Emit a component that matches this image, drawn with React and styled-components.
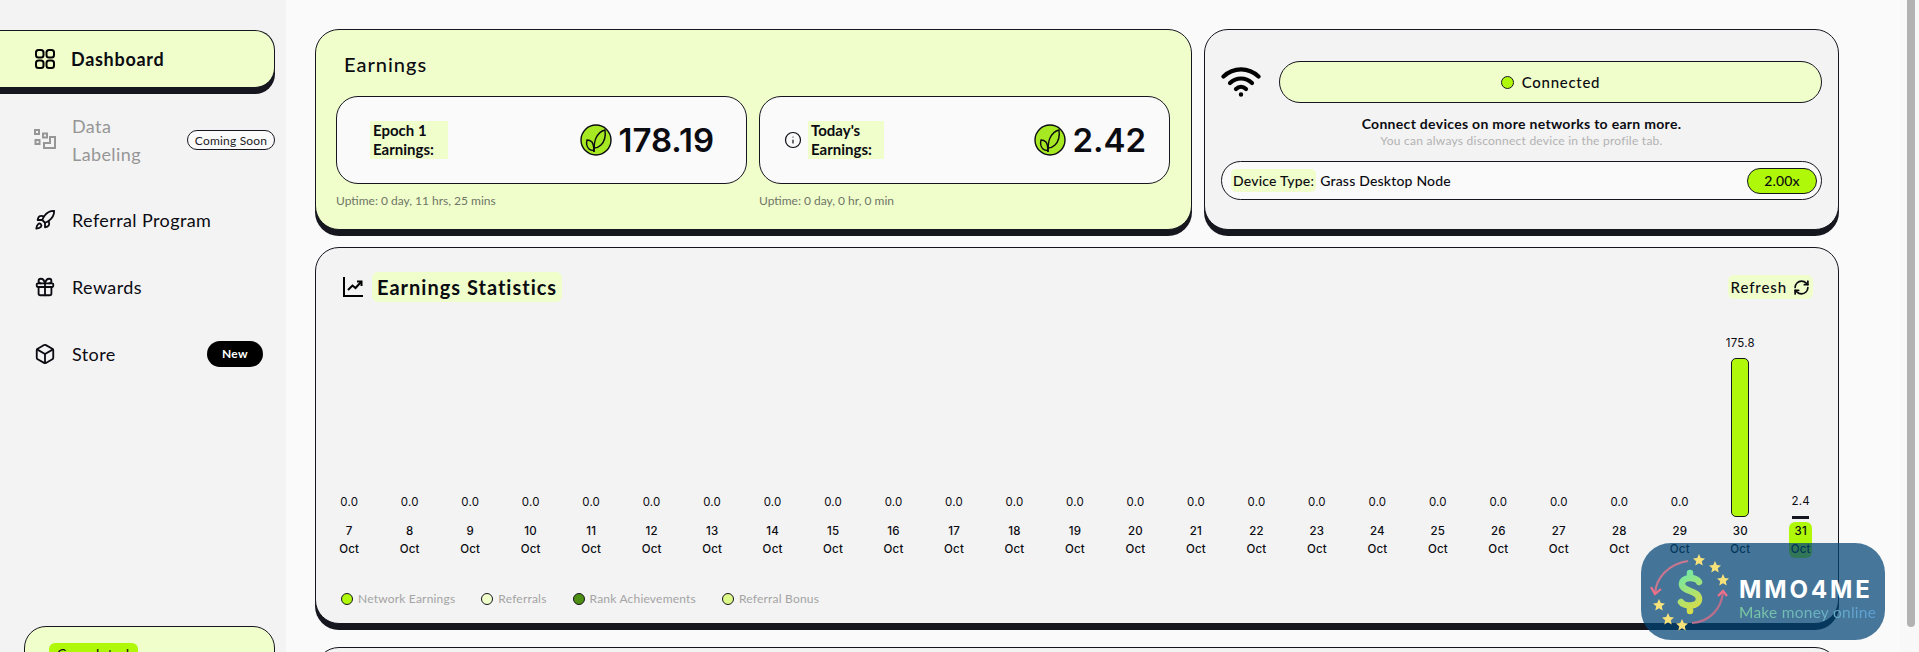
import React from 'react';
import styled, { createGlobalStyle } from 'styled-components';
import { Rocket, Gift, Box, RefreshCw, Info } from 'lucide-react';

const LIME = '#aff80a';
const PALE = '#f0fecb';
const INK = '#16161f';
const TEXT_FONT = '"Lato", "Liberation Sans", sans-serif';
const NUM_FONT = '"Inter", "Liberation Sans", sans-serif';

const GlobalStyle = createGlobalStyle`
  html, body {
    margin: 0;
    height: 100%;
    overflow: hidden;
    background: #fafafa;
  }
  * { box-sizing: border-box; }
`;

const Page = styled.div`
  position: relative;
  display: flex;
  height: 652px;
  overflow: hidden;
  font-family: ${TEXT_FONT};
  color: #0b0b12;
`;

const Sidebar = styled.aside`
  flex: 0 0 286px;
  background: #f3f3f3;
  padding: 30px 11px 0 0;
  display: flex;
  flex-direction: column;
  overflow: hidden;
`;

const NavItem = styled.div`
  display: flex;
  align-items: center;
  flex-shrink: 0;
  height: ${(p) => p.$height || 67}px;
  padding-left: 34px;
  padding-right: ${(p) => p.$padRight || 0}px;
  font-size: 18px;
  letter-spacing: 0.4px;
  color: ${(p) => (p.$muted ? '#969696' : '#0b0b12')};
  svg { flex-shrink: 0; }
`;

const ActiveItem = styled(NavItem)`
  background: ${PALE};
  border: 1px solid ${INK};
  border-left: 0;
  border-radius: 0 20px 20px 0;
  box-shadow: 0 6px 0 ${INK};
  font-weight: 700;
  letter-spacing: 0.7px;
  margin-bottom: 6px;
  padding-left: 35px;
`;

const NavLabel = styled.span`
  margin-left: 16px;
  line-height: 28px;
  width: ${(p) => p.$width || 'auto'};
`;

const SoonBadge = styled.span`
  margin-left: auto;
  height: 20px;
  width: 88px;
  border: 1px solid ${INK};
  border-radius: 10px;
  font-size: 12px;
  letter-spacing: 0.2px;
  color: #1c1c26;
  background: #fafafa;
  display: flex;
  align-items: center;
  justify-content: center;
`;

const NewBadge = styled.span`
  margin-left: auto;
  width: 56px;
  height: 26px;
  border-radius: 13px;
  background: #000;
  color: #fff;
  font-size: 12px;
  font-weight: 700;
  display: flex;
  align-items: center;
  justify-content: center;
`;

const PromoCard = styled.div`
  flex-shrink: 0;
  margin: 239px 0 0 24px;
  width: 251px;
  height: 120px;
  background: ${PALE};
  border: 1px solid ${INK};
  border-radius: 22px;
  padding: 16px 0 0 24px;
`;

const CompletedTag = styled.span`
  display: inline-block;
  background: ${LIME};
  border-radius: 6px;
  padding: 2px 8px;
  font-size: 14px;
  letter-spacing: 0.6px;
  line-height: 18px;
`;

const Main = styled.main`
  flex: 1;
  padding: 29px 0 0 29px;
  display: flex;
  flex-direction: column;
  gap: 17px;
  overflow: hidden;
`;

const TopRow = styled.div`
  display: grid;
  grid-template-columns: 877px 635px;
  gap: 12px;
  flex-shrink: 0;
`;

const Card = styled.section`
  background: ${(p) => (p.$pale ? PALE : '#f3f3f3')};
  border: 1px solid ${INK};
  border-radius: 24px;
  box-shadow: ${(p) => (p.$flat ? 'none' : `0 6px 0 ${INK}`)};
`;

const EarningsCard = styled(Card)`
  height: 201px;
  padding: 21px 21px 0 20px;
`;

const CardTitle = styled.h2`
  margin: 0 0 0 8px;
  font-size: 20px;
  line-height: 26px;
  font-weight: 500;
  letter-spacing: 1px;
`;

const EarnGrid = styled.div`
  display: grid;
  grid-template-columns: 411px 411px;
  gap: 12px;
  margin-top: 19px;
`;

const EarnBox = styled.div`
  height: 88px;
  background: #fafafa;
  border: 1px solid ${INK};
  border-radius: 22px;
  display: flex;
  align-items: center;
  padding: 0 ${(p) => p.$padRight}px 0 ${(p) => p.$padLeft}px;
`;

const EarnLabel = styled.div`
  background: ${PALE};
  padding: 0 3px;
  margin-left: ${(p) => p.$gap || 0}px;
  width: ${(p) => p.$width}px;
  font-size: 15px;
  font-weight: 700;
  line-height: 19px;
`;

const EarnValue = styled.div`
  margin-left: auto;
  display: flex;
  align-items: center;
  gap: 6px;
  font-family: ${NUM_FONT};
  font-size: 33px;
  font-weight: 600;
`;

const Uptime = styled.div`
  margin-top: 9px;
  font-size: 12px;
  color: #6f7567;
`;

const StatusCard = styled(Card)`
  height: 201px;
  padding: 31px 16px 0 16px;
`;

const StatusTop = styled.div`
  display: flex;
  align-items: center;
  gap: 18px;
`;

const ConnectedPill = styled.div`
  flex: 1;
  height: 42px;
  background: ${PALE};
  border: 1px solid ${INK};
  border-radius: 21px;
  display: flex;
  align-items: center;
  justify-content: center;
  gap: 8px;
  font-size: 15px;
  font-weight: 500;
  letter-spacing: 0.7px;
`;

const Dot = styled.span`
  display: inline-block;
  flex-shrink: 0;
  width: ${(p) => p.$size || 12}px;
  height: ${(p) => p.$size || 12}px;
  border-radius: 50%;
  border: 1px solid ${INK};
  background: ${(p) => p.$color || LIME};
`;

const StatusHead = styled.div`
  margin-top: 12px;
  text-align: center;
  font-size: 14px;
  font-weight: 700;
  line-height: 18px;
  letter-spacing: 0.3px;
`;

const StatusSub = styled.div`
  text-align: center;
  font-size: 12px;
  line-height: 16px;
  letter-spacing: 0.25px;
  color: #b2b2b2;
`;

const DeviceRow = styled.div`
  margin-top: 12px;
  height: 39px;
  background: #fafafa;
  border: 1px solid ${INK};
  border-radius: 20px;
  display: flex;
  align-items: center;
  padding: 0 4px 0 9px;
  font-size: 14px;
  font-weight: 500;
  letter-spacing: 0.2px;
`;

const DeviceTag = styled.span`
  background: ${PALE};
  border-radius: 5px;
  padding: 3px 2px;
  margin-right: 4px;
  font-weight: 500;
`;

const RateBadge = styled.span`
  margin-left: auto;
  width: 70px;
  height: 26px;
  background: ${LIME};
  border: 1px solid ${INK};
  border-radius: 13px;
  display: flex;
  align-items: center;
  justify-content: center;
`;

const StatsCard = styled(Card)`
  flex-shrink: 0;
  width: 1524px;
  height: 377px;
  padding: 24px 7px 0 3px;
`;

const StatsHeader = styled.div`
  display: flex;
  align-items: center;
  padding: 0 18px 0 23px;
  height: 30px;
`;

const TitleTag = styled.span`
  background: ${PALE};
  border-radius: 6px;
  padding: 3px 5px;
  margin-left: 8px;
  font-size: 20px;
  font-weight: 700;
  letter-spacing: 1px;
  line-height: 24px;
`;

const RefreshTag = styled.span`
  margin-left: auto;
  background: ${PALE};
  border-radius: 6px;
  padding: 2px 3px;
  font-size: 15px;
  font-weight: 500;
  letter-spacing: 0.9px;
  line-height: 20px;
  display: inline-flex;
  align-items: center;
  gap: 6px;
`;

const Chart = styled.div`
  display: grid;
  grid-template-columns: repeat(25, 1fr);
  align-items: end;
  height: 256px;
  font-family: ${NUM_FONT};
  font-size: 11.5px;
  letter-spacing: 0.2px;
  text-align: center;
`;

const Column = styled.div`
  display: flex;
  flex-direction: column;
  align-items: center;
`;

const BarValue = styled.div`
  line-height: 14px;
  margin-bottom: ${(p) => (p.$bar ? 8 : 13)}px;
`;

const Bar = styled.div`
  width: ${(p) => (p.$height > 10 ? 18 : 17)}px;
  height: ${(p) => p.$height}px;
  background: ${(p) => (p.$height > 10 ? LIME : INK)};
  border: ${(p) => (p.$height > 10 ? `1px solid ${INK}` : '0')};
  border-radius: ${(p) => (p.$height > 10 ? 5 : 0)}px;
  margin-bottom: ${(p) => (p.$height > 10 ? 5 : 3)}px;
`;

const DateCell = styled.div`
  width: 23px;
  line-height: 18px;
  font-weight: 500;
  background: ${(p) => (p.$today ? LIME : 'transparent')};
  border-radius: 6px;
`;

const Legend = styled.div`
  display: flex;
  align-items: center;
  margin-top: 33px;
  padding-left: 22px;
  font-size: 12px;
  letter-spacing: 0.2px;
  color: #a4a4a4;
`;

const LegendItem = styled.div`
  display: flex;
  align-items: center;
  gap: 5px;
  margin-right: 26px;
`;

const BottomCard = styled(Card)`
  flex-shrink: 0;
  width: 1524px;
  height: 120px;
  margin-top: 6px;
`;

const ScrollTrack = styled.div`
  flex: 0 0 19px;
  background: #f8f8f8;
  padding-left: 7px;
`;

const ScrollThumb = styled.div`
  width: 8px;
  height: 627px;
  background: #b2b2b2;
  border-radius: 0 0 4px 4px;
`;

const Watermark = styled.div`
  position: absolute;
  left: 1641px;
  top: 543px;
  width: 244px;
  height: 97px;
  border-radius: 30px;
  background: rgba(0, 68, 118, 0.72);
  display: flex;
  align-items: center;
  padding-left: 8px;
`;

const WatermarkText = styled.div`
  margin: 15px 0 0 6px;
  flex-shrink: 0;
  white-space: nowrap;
`;

const WatermarkName = styled.div`
  color: #fff;
  font-family: "Inter", sans-serif;
  font-size: 24px;
  font-weight: 700;
  line-height: 26px;
  letter-spacing: 2.9px;
`;

const WatermarkSlogan = styled.div`
  font-family: "Lato", sans-serif;
  font-size: 15.5px;
  line-height: 18px;
  letter-spacing: 0.25px;
  color: transparent;
  background: linear-gradient(90deg, #7fcda0, #5c9fd8);
  background-clip: text;
  -webkit-background-clip: text;
`;

function GridIcon() {
  return (
    <svg width="20" height="20" viewBox="0 0 20 20" fill="none" stroke="#000" strokeWidth="2">
      <rect x="1" y="1" width="7.5" height="7.5" rx="2.5" />
      <rect x="11.5" y="1" width="7.5" height="7.5" rx="2.5" />
      <rect x="1" y="11.5" width="7.5" height="7.5" rx="2.5" />
      <rect x="11.5" y="11.5" width="7.5" height="7.5" rx="2.5" />
    </svg>
  );
}

function LabelingIcon() {
  return (
    <svg width="22" height="22" viewBox="0 0 22 22" fill="none" stroke="#969696" strokeWidth="2">
      <rect x="1" y="1" width="4" height="4" />
      <rect x="9" y="4.5" width="4" height="4" />
      <rect x="1.5" y="11" width="4" height="4" />
      <path d="M10 19h11V8h-5v6h-6z" />
    </svg>
  );
}

function TrendIcon() {
  return (
    <svg width="22" height="22" viewBox="0 0 22 22" fill="none" stroke="#000" strokeWidth="2">
      <path d="M2 1v19h19" />
      <path d="M6 14l4.500-4.500 3 2.500 5.500-6" />
      <path d="M15 5.500h4.500V10" />
    </svg>
  );
}

function Leaf({ size = 32 }) {
  return (
    <svg width={size} height={size} viewBox="0 0 32 32" fill="none" stroke="#0b0b12" strokeWidth="1.4">
      <circle cx="16" cy="16" r="15" fill="#a6e822" />
      <path d="M14 28c0-6 0-10 2-14 2-4 5-7 9-8 1 7-1 12-4 15-2 2-5 3-7 3" />
      <path d="M14 28c0-3 0-7-2-10-1-1-3-2-5-2-1 4 0 7 2 9 1 1 3 1.500 5 1.500" />
    </svg>
  );
}

function WifiIcon() {
  return (
    <svg width="40" height="30" viewBox="0 0 40 30" fill="none" stroke="#000" strokeWidth="4.2" strokeLinecap="round">
      <path d="M2.500 9.500c10-9.500 25-9.500 35 0" />
      <path d="M9 16c6.500-6 15.500-6 22 0" />
      <path d="M15 22c3-2.800 7-2.800 10 0" />
      <circle cx="20" cy="27.500" r="1.400" fill="#000" strokeWidth="1.600" />
    </svg>
  );
}

function Star({ x, y }) {
  return (
    <path
      transform={`translate(${x} ${y})`}
      d="M0-6 1.800-2 6-1.600 2.800 1.300 3.700 5.500 0 3.300-3.700 5.500-2.800 1.300-6-1.600-1.800-2z"
      fill="#f7e27a"
    />
  );
}

function MoneyLogo() {
  return (
    <svg width="84" height="84" viewBox="0 0 84 84" fill="none" style={{ flexShrink: 0 }}>
      <defs>
        <linearGradient id="dollarFill" gradientUnits="userSpaceOnUse" x1="31" y1="23" x2="53" y2="61">
          <stop offset="0" stopColor="#6fe8a8" />
          <stop offset="1" stopColor="#e2dc3e" />
        </linearGradient>
      </defs>
      <path d="M39 11C20 14 7 27 6 44" stroke="#c9768f" strokeWidth="2.200" />
      <path d="M2 37l4 7 6-5" stroke="#f0708a" strokeWidth="2.200" />
      <path d="M43 73c17-1 30-14 31-32" stroke="#b96f8c" strokeWidth="2.200" />
      <path d="M69 46l5-5 4 5" stroke="#f0708a" strokeWidth="2.200" />
      <path
        d="M50 32C48 27 33 26 33 34 33 42 50 40 50 49 50 57 35 57 32 52M41 23v5M41 56v5"
        stroke="url(#dollarFill)"
        strokeWidth="6.500"
        strokeLinecap="round"
      />
      <Star x={50} y={10} />
      <Star x={66} y={17} />
      <Star x={74} y={30} />
      <Star x={10} y={55} />
      <Star x={19} y={69} />
      <Star x={33} y={75} />
    </svg>
  );
}

const DAYS = Array.from({ length: 25 }, (_, i) => {
  const day = 7 + i;
  if (day === 30) return { day, value: '175.8', bar: 159 };
  if (day === 31) return { day, value: '2.4', bar: 3 };
  return { day, value: '0.0', bar: 0 };
});

const LEGEND = [
  { name: 'Network Earnings', color: LIME },
  { name: 'Referrals', color: PALE },
  { name: 'Rank Achievements', color: '#4c8f13' },
  { name: 'Referral Bonus', color: '#dcf98a' },
];

export default function App() {
  return (
    <Page>
      <GlobalStyle />
      <Sidebar>
        <ActiveItem $height={58}>
          <GridIcon />
          <NavLabel>Dashboard</NavLabel>
        </ActiveItem>
        <NavItem $height={92} $muted>
          <LabelingIcon />
          <NavLabel $width="70px">Data Labeling</NavLabel>
          <SoonBadge>Coming Soon</SoonBadge>
        </NavItem>
        <NavItem>
          <Rocket size={22} strokeWidth={2} />
          <NavLabel>Referral Program</NavLabel>
        </NavItem>
        <NavItem>
          <Gift size={22} strokeWidth={2} />
          <NavLabel>Rewards</NavLabel>
        </NavItem>
        <NavItem $padRight={12}>
          <Box size={22} strokeWidth={2} />
          <NavLabel>Store</NavLabel>
          <NewBadge>New</NewBadge>
        </NavItem>
        <PromoCard>
          <CompletedTag>Completed</CompletedTag>
        </PromoCard>
      </Sidebar>

      <Main>
        <TopRow>
          <EarningsCard $pale>
            <CardTitle>Earnings</CardTitle>
            <EarnGrid>
              <div>
                <EarnBox $padLeft={33} $padRight={32}>
                  <EarnLabel $width={78}>Epoch 1 Earnings:</EarnLabel>
                  <EarnValue>
                    <Leaf />
                    178.19
                  </EarnValue>
                </EarnBox>
                <Uptime>Uptime: 0 day, 11 hrs, 25 mins</Uptime>
              </div>
              <div>
                <EarnBox $padLeft={24} $padRight={23}>
                  <Info size={18} strokeWidth={1.6} />
                  <EarnLabel $width={76} $gap={6}>
                    Today's Earnings:
                  </EarnLabel>
                  <EarnValue>
                    <Leaf />
                    2.42
                  </EarnValue>
                </EarnBox>
                <Uptime>Uptime: 0 day, 0 hr, 0 min</Uptime>
              </div>
            </EarnGrid>
          </EarningsCard>

          <StatusCard>
            <StatusTop>
              <WifiIcon />
              <ConnectedPill>
                <Dot $size={13} />
                Connected
              </ConnectedPill>
            </StatusTop>
            <StatusHead>Connect devices on more networks to earn more.</StatusHead>
            <StatusSub>You can always disconnect device in the profile tab.</StatusSub>
            <DeviceRow>
              <DeviceTag>Device Type:</DeviceTag>
              Grass Desktop Node
              <RateBadge>2.00x</RateBadge>
            </DeviceRow>
          </StatusCard>
        </TopRow>

        <StatsCard>
          <StatsHeader>
            <TrendIcon />
            <TitleTag>Earnings Statistics</TitleTag>
            <RefreshTag>
              Refresh
              <RefreshCw size={17} strokeWidth={2.4} />
            </RefreshTag>
          </StatsHeader>
          <Chart>
            {DAYS.map((d) => (
              <Column key={d.day}>
                <BarValue $bar={d.bar > 0}>{d.value}</BarValue>
                {d.bar > 0 && <Bar $height={d.bar} />}
                <DateCell $today={d.day === 31}>
                  {d.day}
                  <br />
                  Oct
                </DateCell>
              </Column>
            ))}
          </Chart>
          <Legend>
            {LEGEND.map((l) => (
              <LegendItem key={l.name}>
                <Dot $color={l.color} />
                {l.name}
              </LegendItem>
            ))}
          </Legend>
        </StatsCard>

        <BottomCard $flat />
      </Main>

      <ScrollTrack>
        <ScrollThumb />
      </ScrollTrack>

      <Watermark>
        <MoneyLogo />
        <WatermarkText>
          <WatermarkName>MMO4ME</WatermarkName>
          <WatermarkSlogan>Make money online</WatermarkSlogan>
        </WatermarkText>
      </Watermark>
    </Page>
  );
}
